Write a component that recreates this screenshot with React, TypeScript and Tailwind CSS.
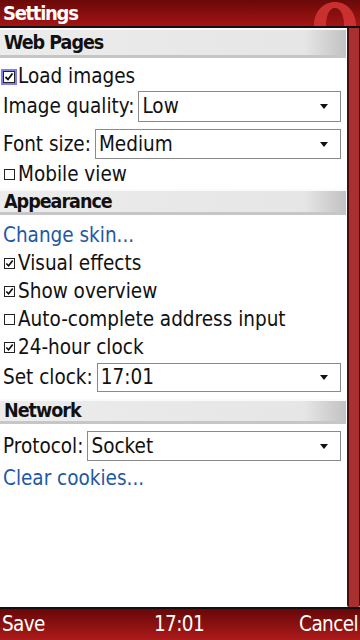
import React from "react";

const font = { fontFamily: '"DejaVu Sans Condensed", "DejaVu Sans", sans-serif' };

function Box({ checked, focus }: { checked?: boolean; focus?: boolean }) {
  if (focus) {
    return (
      <span className="inline-flex w-[16px] h-[16px] ml-[1px] mr-[1px] items-center justify-center border-2 border-[#7f7fe8] bg-[#dce4ff] shrink-0">
        <svg width="12" height="12" viewBox="0 0 12 12">
          <rect x="0.5" y="0.5" width="11" height="11" fill="white" stroke="#222" />
          <path d="M2.5 6 L5 8.5 L9.5 2.5" fill="none" stroke="#111" strokeWidth="1.8" />
        </svg>
      </span>
    );
  }
  return (
    <span className="inline-flex w-[12px] h-[12px] ml-[3px] mr-[3px] items-center justify-center shrink-0">
      <svg width="11" height="11" viewBox="0 0 11 11">
        <rect x="0.5" y="0.5" width="10" height="10" fill="white" stroke="#222" />
        {checked && <path d="M2.3 5.5 L4.6 7.8 L8.7 2.5" fill="none" stroke="#111" strokeWidth="1.7" />}
      </svg>
    </span>
  );
}

function Header({ title, h }: { title: string; h: string }) {
  return (
    <div className={`${h} flex items-center pl-[4px] text-[19.5px] tracking-[-1px] font-bold text-[#111] bg-gradient-to-r from-[#ececec] via-[#e6e6e6] via-88% to-[#c2c2c2] border-t-2 border-t-[#fafafa] border-b-[3px] border-b-[#c6c6c6]`}>
      {title}
    </div>
  );
}

function Check({ label, checked, focus, h }: { label: string; checked?: boolean; focus?: boolean; h: string }) {
  return (
    <div className={`${h} flex items-center text-[20.5px] text-[#111]`}>
      <Box checked={checked} focus={focus} />
      <span>{label}</span>
    </div>
  );
}

function Select({ label, value, box }: { label: string; value: string; box: string }) {
  return (
    <div className={`${box} flex items-center pl-[3px] pr-[5px] text-[20.5px] text-[#111]`}>
      <span className="mr-[4px] whitespace-nowrap">{label}</span>
      <div className="flex-1 h-full border border-[#8a8a8a] bg-white flex items-center pl-[3px] pr-[12px] justify-between">
        <span>{value}</span>
        <svg width="8" height="5" viewBox="0 0 8 5">
          <path d="M0 0 H8 L4 5 Z" fill="#111" />
        </svg>
      </div>
    </div>
  );
}

function Link({ label, h }: { label: string; h: string }) {
  return <div className={`${h} flex items-center pl-[3px] text-[20.5px] text-[#1f58a4]`}>{label}</div>;
}

export default function App() {
  return (
    <div className="w-[360px] h-[640px] flex flex-col bg-white overflow-hidden" style={font}>
      <div className="h-[26px] shrink-0 relative bg-gradient-to-b from-[#6a0909] to-[#a51414] flex items-center pl-[3px] overflow-hidden">
        <span className="text-white text-[20px] tracking-[-1.3px] font-bold leading-none">Settings</span>
        {/* faded opera logo */}
        <svg className="absolute left-[312px] top-[1px]" width="46" height="25" viewBox="0 0 46 25">
          <path
            fillRule="evenodd"
            d="M23 1 C35 1 44 11 44 24 C44 37 35 47 23 47 C11 47 2 37 2 24 C2 11 11 1 23 1 Z M23 7 C17 7 14 15 14 24 C14 33 17 41 23 41 C29 41 32 33 32 24 C32 15 29 7 23 7 Z"
            fill="#d23434"
            opacity="0.9"
          />
        </svg>
      </div>
      <div className="h-[2px] shrink-0 bg-[#111]" />
      <div className="flex-1 flex min-h-0">
        <div className="flex-1 flex flex-col">
          <Header title="Web Pages" h="h-[30px]" />
          <Check label="Load images" checked focus h="h-[33px] pt-[4px]" />
          <Select label="Image quality:" value="Low" box="h-[31px]" />
          <div className="h-[7px]" />
          <Select label="Font size:" value="Medium" box="h-[30px]" />
          <Check label="Mobile view" h="h-[30px]" />
          <Header title="Appearance" h="h-[26px]" />
          <Link label="Change skin..." h="h-[34px] pt-[6px]" />
          <Check label="Visual effects" checked h="h-[28px]" />
          <Check label="Show overview" checked h="h-[28px]" />
          <Check label="Auto-complete address input" h="h-[28px]" />
          <Check label="24-hour clock" checked h="h-[28px]" />
          <div className="h-[2px]" />
          <Select label="Set clock:" value="17:01" box="h-[29px]" />
          <div className="h-[7px]" />
          <Header title="Network" h="h-[25px]" />
          <div className="h-[7px]" />
          <Select label="Protocol:" value="Socket" box="h-[30px]" />
          <div className="h-[3px]" />
          <Link label="Clear cookies..." h="h-[28px]" />
        </div>
        <div className="w-[13px] ml-[1px] border-l-2 border-l-[#4a0c0c] border-r border-r-[#4a0c0c] bg-[#a83030] rounded-b-[2px]" />
      </div>
      <div className="h-[2px] shrink-0 bg-[#111]" />
      <div className="h-[31px] shrink-0 bg-gradient-to-b from-[#680808] to-[#ae1a1a] flex items-center justify-between px-[2px] text-white text-[20.5px] tracking-[-0.6px]">
        <span>Save</span>
        <span className="pl-[14px]">17:01</span>
        <span>Cancel</span>
      </div>
    </div>
  );
}
